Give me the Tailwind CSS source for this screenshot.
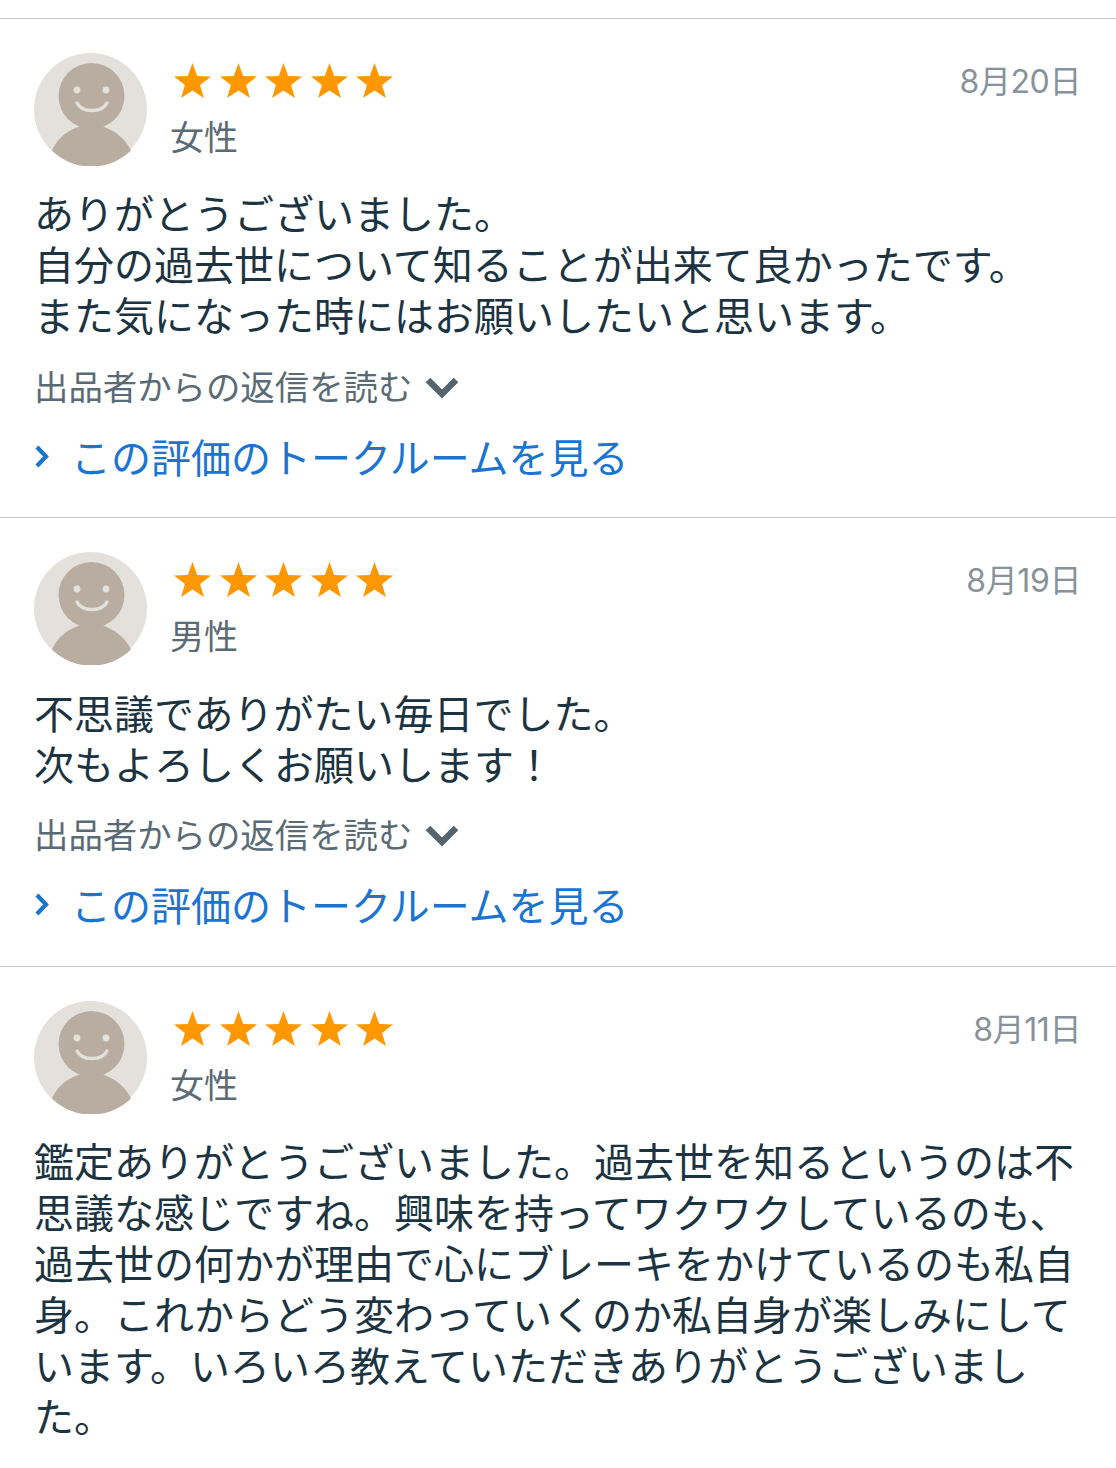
<!DOCTYPE html>
<html lang="ja">
<head>
    <meta charset="UTF-8">
    <title>評価</title>
    <script src="https://cdn.jsdelivr.net/npm/@tailwindcss/browser@4"></script>
</head>
<body class="w-[1116px] h-[1468px] overflow-hidden bg-white font-['Noto_Sans_CJK_JP',sans-serif]">

<!-- shared icons -->
<svg class="absolute w-0 h-0">
    <defs>
        <g id="avatar">
            <circle cx="56.5" cy="56.5" r="56.5" fill="#e4e1dc"/>
            <path d="M18 97.5 C25 81 42 72 57 72 C72 72 89 81 97 97.5 A56.5 56.5 0 0 1 18 97.5 Z" fill="#b9ada2"/>
            <circle cx="57.5" cy="43" r="33" fill="#b9ada2"/>
            <circle cx="43" cy="37" r="3.4" fill="#e4e1dc"/>
            <circle cx="72" cy="37" r="3.4" fill="#e4e1dc"/>
            <path d="M43 50 C48 60 68 60 73 50" fill="none" stroke="#e4e1dc" stroke-width="3.4" stroke-linecap="round"/>
        </g>
        <polygon id="star" fill="#ff9800" points="18.5,0 23.2,12.9 37,13.4 26.1,21.9 29.9,35 18.5,27.4 7.1,35 10.9,21.9 0,13.4 13.8,12.9"/>
        <path id="chev-down" d="M2 3 L16 17 L30 3" fill="none" stroke="#546470" stroke-width="6.5"/>
        <path id="chev-right" d="M2 2 L11 11.5 L2 21" fill="none" stroke="#1a75d2" stroke-width="4.2"/>
    </defs>
</svg>

<div class="h-[18px]"></div>

<!-- review 1 -->
<section class="h-[499px] border-t border-[#c4c6c8] pt-[34px] pl-[34px] pr-[36px]">
    <div class="flex h-[113px]">
        <svg class="w-[113px] h-[113px] shrink-0" viewBox="0 0 113 113"><use href="#avatar"/></svg>
        <div class="ml-[24px] flex-1">
            <div class="flex justify-between items-start">
                <div class="ml-[3px] mt-[10px] flex gap-[8.5px]">
                    <svg class="w-[37px] h-[35px]" viewBox="0 0 37 35"><use href="#star"/></svg>
                    <svg class="w-[37px] h-[35px]" viewBox="0 0 37 35"><use href="#star"/></svg>
                    <svg class="w-[37px] h-[35px]" viewBox="0 0 37 35"><use href="#star"/></svg>
                    <svg class="w-[37px] h-[35px]" viewBox="0 0 37 35"><use href="#star"/></svg>
                    <svg class="w-[37px] h-[35px]" viewBox="0 0 37 35"><use href="#star"/></svg>
                </div>
                <div class="mt-[9px] -mr-[1px] font-['Inter','Noto_Sans_CJK_JP',sans-serif] text-[32px] tracking-[-0.4px] leading-[40px] text-[#87929a]">8月20日</div>
            </div>
            <div class="mt-[11px] -ml-[1px] text-[34px] leading-[46px] text-[#5b6b75]">女性</div>
        </div>
    </div>
    <p class="mt-[21px] text-[40px] leading-[51px] text-[#1c3442]">ありがとうございました。<br>自分の過去世について知ることが出来て良かったです。<br>また気になった時にはお願いしたいと思います。</p>
    <div class="mt-[23px] flex items-center h-[46px] text-[34.4px] text-[#5b6b75]">
        <span>出品者からの返信を読む</span>
        <svg class="ml-[14px] mt-[2px] w-[32px] h-[20px] overflow-visible" viewBox="0 0 32 20"><use href="#chev-down"/></svg>
    </div>
    <a class="mt-[22px] ml-[1px] flex items-center h-[50px] text-[40px] text-[#1a75d2]">
        <svg class="mt-[2px] w-[14px] h-[24px]" viewBox="0 0 14 24"><use href="#chev-right"/></svg>
        <span class="ml-[22px]">この評価のトークルームを見る</span>
    </a>
</section>

<!-- review 2 -->
<section class="h-[449px] border-t border-[#c4c6c8] pt-[34px] pl-[34px] pr-[36px]">
    <div class="flex h-[113px]">
        <svg class="w-[113px] h-[113px] shrink-0" viewBox="0 0 113 113"><use href="#avatar"/></svg>
        <div class="ml-[24px] flex-1">
            <div class="flex justify-between items-start">
                <div class="ml-[3px] mt-[10px] flex gap-[8.5px]">
                    <svg class="w-[37px] h-[35px]" viewBox="0 0 37 35"><use href="#star"/></svg>
                    <svg class="w-[37px] h-[35px]" viewBox="0 0 37 35"><use href="#star"/></svg>
                    <svg class="w-[37px] h-[35px]" viewBox="0 0 37 35"><use href="#star"/></svg>
                    <svg class="w-[37px] h-[35px]" viewBox="0 0 37 35"><use href="#star"/></svg>
                    <svg class="w-[37px] h-[35px]" viewBox="0 0 37 35"><use href="#star"/></svg>
                </div>
                <div class="mt-[9px] -mr-[1px] font-['Inter','Noto_Sans_CJK_JP',sans-serif] text-[32px] tracking-[-0.4px] leading-[40px] text-[#87929a]">8月19日</div>
            </div>
            <div class="mt-[11px] -ml-[1px] text-[34px] leading-[46px] text-[#5b6b75]">男性</div>
        </div>
    </div>
    <p class="mt-[22px] text-[40px] leading-[51px] text-[#1c3442]">不思議でありがたい毎日でした。<br>次もよろしくお願いします！</p>
    <div class="mt-[22px] flex items-center h-[46px] text-[34.4px] text-[#5b6b75]">
        <span>出品者からの返信を読む</span>
        <svg class="ml-[14px] mt-[2px] w-[32px] h-[20px] overflow-visible" viewBox="0 0 32 20"><use href="#chev-down"/></svg>
    </div>
    <a class="mt-[22px] ml-[1px] flex items-center h-[50px] text-[40px] text-[#1a75d2]">
        <svg class="mt-[2px] w-[14px] h-[24px]" viewBox="0 0 14 24"><use href="#chev-right"/></svg>
        <span class="ml-[22px]">この評価のトークルームを見る</span>
    </a>
</section>

<!-- review 3 -->
<section class="border-t border-[#c4c6c8] pt-[34px] pl-[34px] pr-[36px]">
    <div class="flex h-[113px]">
        <svg class="w-[113px] h-[113px] shrink-0" viewBox="0 0 113 113"><use href="#avatar"/></svg>
        <div class="ml-[24px] flex-1">
            <div class="flex justify-between items-start">
                <div class="ml-[3px] mt-[10px] flex gap-[8.5px]">
                    <svg class="w-[37px] h-[35px]" viewBox="0 0 37 35"><use href="#star"/></svg>
                    <svg class="w-[37px] h-[35px]" viewBox="0 0 37 35"><use href="#star"/></svg>
                    <svg class="w-[37px] h-[35px]" viewBox="0 0 37 35"><use href="#star"/></svg>
                    <svg class="w-[37px] h-[35px]" viewBox="0 0 37 35"><use href="#star"/></svg>
                    <svg class="w-[37px] h-[35px]" viewBox="0 0 37 35"><use href="#star"/></svg>
                </div>
                <div class="mt-[9px] -mr-[1px] font-['Inter','Noto_Sans_CJK_JP',sans-serif] text-[32px] tracking-[-0.4px] leading-[40px] text-[#87929a]">8月11日</div>
            </div>
            <div class="mt-[11px] -ml-[1px] text-[34px] leading-[46px] text-[#5b6b75]">女性</div>
        </div>
    </div>
    <p class="mt-[21px] text-[40px] leading-[51px] text-[#1c3442]">鑑定ありがとうございました。過去世を知るというのは不思議な感じですね。興味を持ってワクワクしているのも、過去世の何かが理由で心にブレーキをかけているのも私自身。これからどう変わっていくのか私自身が楽しみにしています。いろいろ教えていただきありがとうございました。</p>
</section>

</body>
</html>
